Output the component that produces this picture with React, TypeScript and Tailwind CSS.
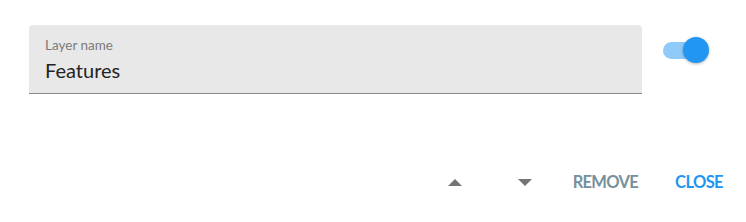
import React from "react";

export default function App() {
  return (
    <div className="w-[746px] h-[222px] bg-white flex flex-col" style={{ fontFamily: "Lato, 'Open Sans', sans-serif" }}>
      <div className="flex items-start pl-[29px] pt-[25px]">
        <div className="w-[613px] h-[69px] bg-[#e8e8e8] rounded-t-[4px] border-b border-[#8a8a8a] pl-[16px] pt-[11px]">
          <div className="text-[13.5px] leading-[18px] text-[#7b7b7b]">Layer name</div>
          <div className="text-[20px] leading-[26px] mt-[3px] text-[#232323]">Features</div>
        </div>
        <div className="relative ml-[21px] mt-[15px] w-[46px] h-[20px] flex items-center">
          <div className="w-[34px] h-[17px] rounded-full bg-[#90caf9]" />
          <div className="absolute left-[20px] top-[-3px] w-[26px] h-[26px] rounded-full bg-[#2196f3] shadow-[0_1px_3px_rgba(0,0,0,0.3)]" />
        </div>
      </div>
      <div className="flex items-center justify-end mt-[70px] pr-[15px]">
        <button className="w-[48px] h-[36px] flex items-center justify-center">
          <svg width="14" height="7" viewBox="0 0 14 7"><path d="M0 7 L7 0 L14 7 Z" fill="#757575" /></svg>
        </button>
        <button className="ml-[22px] w-[48px] h-[36px] flex items-center justify-center">
          <svg width="14" height="7" viewBox="0 0 14 7"><path d="M0 0 L14 0 L7 7 Z" fill="#757575" /></svg>
        </button>
        <button className="ml-[16px] h-[36px] px-[8px] text-[16.5px] font-bold text-[#78909c] tracking-[-0.7px]">REMOVE</button>
        <button className="ml-[21px] h-[36px] px-[8px] text-[16.5px] font-bold text-[#2196f3] tracking-[-0.6px]">CLOSE</button>
      </div>
    </div>
  );
}
